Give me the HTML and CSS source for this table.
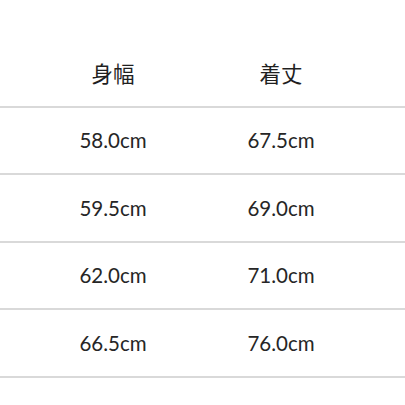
FILE: index.html
```html
<!DOCTYPE html>
<html lang="ja">
<head>
<meta charset="utf-8">
<link rel="stylesheet" href="styles.css">
</head>
<body>
<div class="size-table">
  <div class="row head">
    <div class="cell">身幅</div>
    <div class="cell">着丈</div>
  </div>
  <div class="row">
    <div class="cell">58.0cm</div>
    <div class="cell">67.5cm</div>
  </div>
  <div class="row">
    <div class="cell">59.5cm</div>
    <div class="cell">69.0cm</div>
  </div>
  <div class="row">
    <div class="cell">62.0cm</div>
    <div class="cell">71.0cm</div>
  </div>
  <div class="row">
    <div class="cell">66.5cm</div>
    <div class="cell">76.0cm</div>
  </div>
</div>
</body>
</html>
```
FILE: styles.css
```css
html, body {
  margin: 0;
  padding: 0;
  background: #ffffff;
}
body {
  font-family: Lato, "Noto Sans CJK JP", sans-serif;
  color: #262626;
}
.size-table {
  padding-top: 40px;
}
.row {
  display: grid;
  grid-template-columns: 168px 168px;
  padding-left: 29px;
  height: 65.5px;
  align-items: center;
  border-bottom: 2px solid #d9d9d9;
  font-size: 20.5px;
}
.cell {
  text-align: center;
}
.head .cell {
  font-family: "Noto Sans CJK JP", sans-serif;
  font-size: 21.5px;
  color: #1f1f1f;
}
```
